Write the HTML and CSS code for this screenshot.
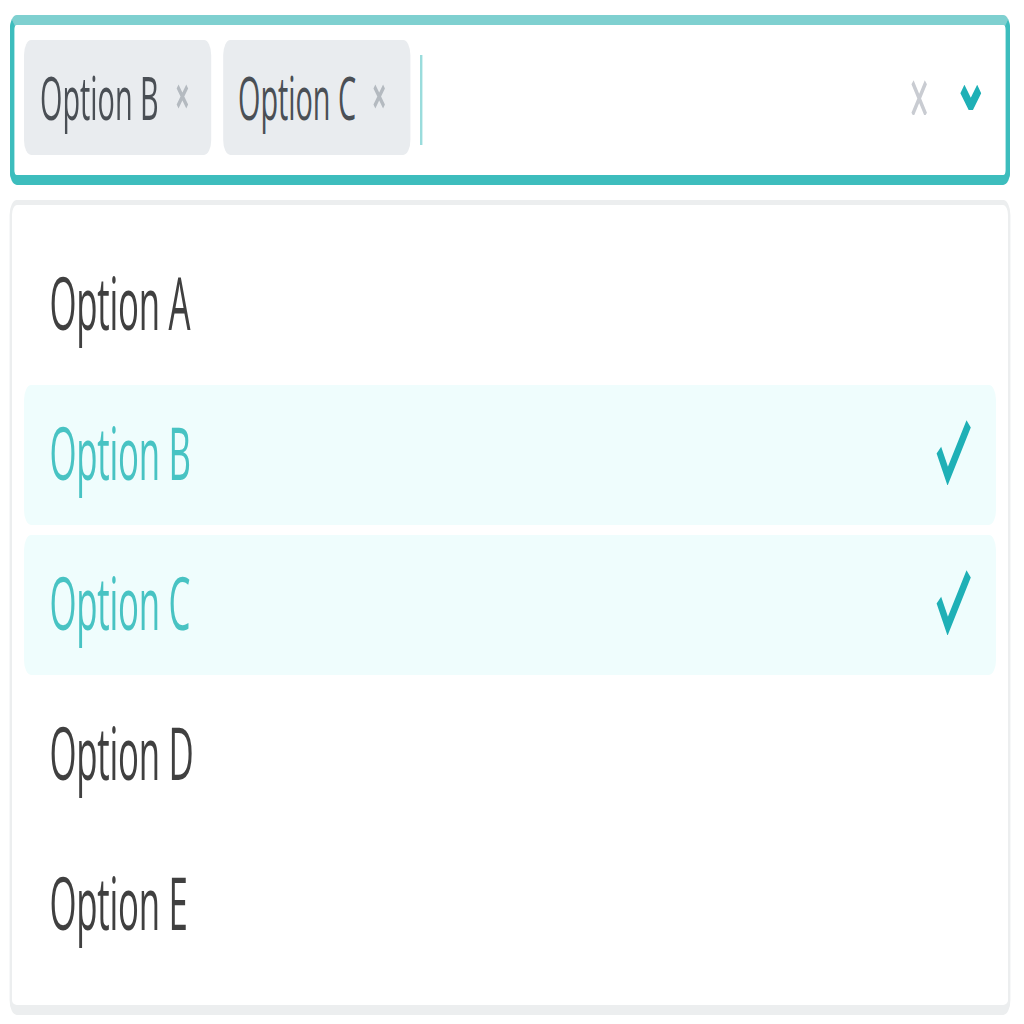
FILE: index.html
```html
<!DOCTYPE html>
<html lang="en">
<head>
<meta charset="utf-8">
<title>Multi select</title>
<link rel="stylesheet" href="styles.css">
</head>
<body>
<div class="page">
<div class="stage">
  <div class="control">
    <div class="chip"><span class="chip-label">Option B</span>
      <svg class="chip-x" viewBox="0 0 6 6"><path d="M1 1L5 5M5 1L1 5"/></svg>
    </div>
    <div class="chip"><span class="chip-label">Option C</span>
      <svg class="chip-x" viewBox="0 0 6 6"><path d="M1 1L5 5M5 1L1 5"/></svg>
    </div>
    <span class="caret"></span>
    <span class="spacer"></span>
    <svg class="clear" viewBox="0 0 8 8"><path d="M1 0.5L7 7.5M7 0.5L1 7.5"/></svg>
    <svg class="chevron" viewBox="0 0 9 5"><path d="M1 0.8L4.5 4.2L8 0.8"/></svg>
  </div>
  <div class="dropdown">
    <div class="option">Option A</div>
    <div class="option selected">Option B
      <svg class="check" viewBox="0 0 15 13"><path d="M1 6.2L4.8 11.6L13.8 0.8"/></svg>
    </div>
    <div class="option selected">Option C
      <svg class="check" viewBox="0 0 15 13"><path d="M1 6.2L4.8 11.6L13.8 0.8"/></svg>
    </div>
    <div class="option">Option D</div>
    <div class="option">Option E</div>
  </div>
</div>
</div>
</body>
</html>
```
FILE: styles.css
```css
html, body {
  margin: 0;
  padding: 0;
  background: #ffffff;
}

.page {
  width: 1024px;
  height: 1024px;
  overflow: hidden;
}

.stage {
  width: 426.67px;
  height: 204.8px;
  box-sizing: border-box;
  padding: 2.6px 5.9px 0 4.2px;
  transform: scale(2.4, 5);
  transform-origin: 0 0;
  font-family: "Open Sans", "Noto Sans", sans-serif;
}

.control {
  height: 34.4px;
  box-sizing: border-box;
  border: 2px solid #3dbdbd;
  border-top-color: #7fd0d0;
  border-radius: 3px;
  display: flex;
  align-items: center;
  padding: 0 10px 0 4.2px;
  background: #ffffff;
}

.chip {
  height: 23px;
  width: 77.9px;
  box-sizing: border-box;
  background: #e9ecef;
  border-radius: 3px;
  display: flex;
  align-items: center;
  padding: 0 0 0 6.3px;
  margin-right: 4.6px;
}

.chip-label {
  font-size: 12px;
  color: #4a4f55;
  line-height: 1;
  white-space: nowrap;
}

.chip-x {
  width: 6px;
  height: 6.6px;
  margin-left: 7px;
  fill: none;
  stroke: #b4bac0;
  stroke-width: 1.1;
}

.caret {
  width: 1px;
  height: 18px;
  background: #9adcdc;
}

.spacer {
  flex: 1;
}

.clear {
  width: 8px;
  height: 7.4px;
  fill: none;
  stroke: #c9ccd2;
  stroke-width: 1.3;
  margin-right: 13px;
}

.chevron {
  width: 9px;
  height: 5px;
  fill: none;
  stroke: #1fb0b6;
  stroke-width: 2.4;
}

.dropdown {
  margin-top: 2.6px;
  border: 1px solid #eceeef;
  border-bottom-width: 2px;
  border-radius: 3px;
  padding: 6px 5px;
  display: flex;
  flex-direction: column;
  gap: 2px;
  background: #ffffff;
}

.option {
  height: 28px;
  display: flex;
  align-items: center;
  justify-content: space-between;
  padding: 0 9.6px 0 10.4px;
  border-radius: 3px;
  font-size: 14.5px;
  letter-spacing: -0.1px;
  color: #404040;
  white-space: nowrap;
}

.option.selected {
  background: #effdfd;
  color: #48c3c3;
}

.check {
  width: 15px;
  height: 12.6px;
  fill: none;
  stroke: #1fb0b6;
  stroke-width: 2.4;
  stroke-linejoin: miter;
}
```
